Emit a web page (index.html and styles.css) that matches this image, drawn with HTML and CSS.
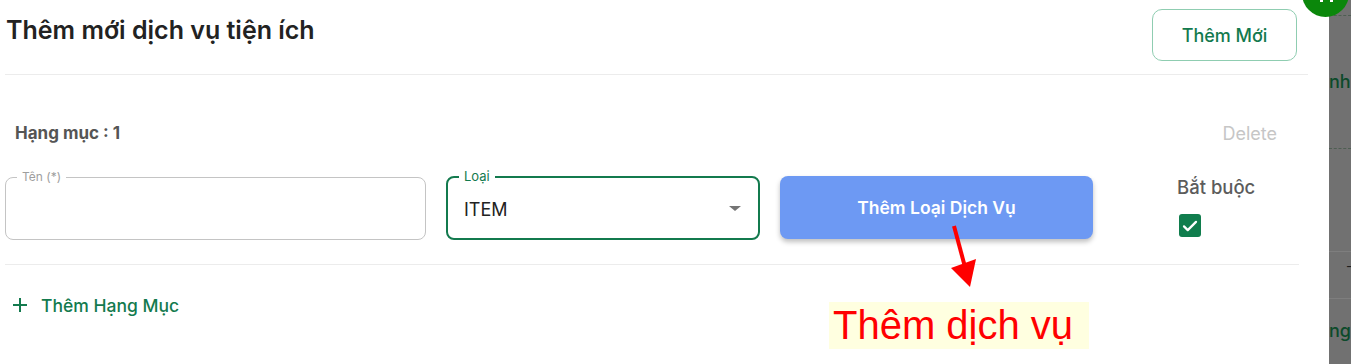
FILE: index.html
```html
<!DOCTYPE html>
<html lang="vi">
<head>
    <meta charset="UTF-8">
    <meta name="viewport" content="width=device-width, initial-scale=1.0">
    <title>Thêm mới dịch vụ tiện ích</title>
    <link rel="stylesheet" href="styles.css">
</head>
<body>
    <div class="modal">
        <div class="modal-header">
            <div class="modal-title">Thêm mới dịch vụ tiện ích</div>
            <button class="btn-outline">Thêm Mới</button>
        </div>

        <div class="section">
            <div class="item-head">
                <span class="item-title">Hạng mục : 1</span>
                <span class="item-delete">Delete</span>
            </div>

            <div class="item-row">
                <div class="field field-name">
                    <span class="field-label">Tên (*)</span>
                </div>
                <div class="field field-select">
                    <span class="field-label">Loại</span>
                    <span class="field-value">ITEM</span>
                    <span class="caret"></span>
                </div>
                <button class="btn-blue">Thêm Loại Dịch Vụ</button>
                <div class="required">
                    <div class="required-label">Bắt buộc</div>
                    <div class="checkbox">
                        <svg width="18" height="18" viewBox="0 0 24 24"><path d="M4 12.5l5 5L20 6.5" fill="none" stroke="#fff" stroke-width="3" stroke-linecap="round" stroke-linejoin="round"/></svg>
                    </div>
                </div>
            </div>

            <div class="add-item">
                <svg width="14" height="14" viewBox="0 0 14 14"><path d="M7 0v14M0 7h14" stroke="#137a4e" stroke-width="2"/></svg>
                <span>Thêm Hạng Mục</span>
            </div>
        </div>

        <svg class="note-arrow" width="40" height="70" viewBox="0 0 40 70">
            <line x1="5" y1="1" x2="16" y2="42" stroke="#ff0000" stroke-width="4"/>
            <polygon points="2,43 27,34 21,62" fill="#ff0000"/>
        </svg>
        <div class="note">Thêm dịch vụ</div>
    </div>

    <div class="backdrop">
        <div class="bd-dash bd-top"></div>
        <div class="bd-text bd-nh">nh</div>
        <div class="bd-dash bd-mid"></div>
        <div class="bd-line bd-l1"></div>
        <div class="bd-minus">-</div>
        <div class="bd-line bd-l2"></div>
        <div class="bd-text bd-ng">ng</div>
    </div>

    <div class="fab"><span></span><span></span></div>
</body>
</html>
```

FILE: styles.css
```css
body {
    margin: 0;
    height: 364px;
    overflow: hidden;
    display: flex;
    font-family: Inter, Roboto, 'Noto Sans', sans-serif;
    background: #fff;
}
.modal {
    flex: 1;
    position: relative;
    background: #fff;
}
.modal-header {
    margin: 0 21px 0 5px;
    height: 75px;
    box-sizing: border-box;
    padding: 9px 11px 0 1px;
    display: flex;
    justify-content: space-between;
    align-items: flex-start;
    border-bottom: 1px solid #ececec;
}
.modal-title {
    margin-top: 6px;
    font-size: 25px;
    line-height: 30px;
    font-weight: 600;
    color: #222;
}
.btn-outline {
    width: 145px;
    height: 52px;
    border: 1px solid #8fcdb1;
    border-radius: 10px;
    background: #fff;
    color: #137a4e;
    font-family: inherit;
    font-size: 18px;
    font-weight: 500;
}
.section {
    margin: 0 30px 0 5px;
}
.item-head {
    margin-top: 40px;
    height: 36px;
    padding: 0 22px 0 10px;
    display: flex;
    justify-content: space-between;
    align-items: center;
}
.item-title {
    font-size: 17px;
    font-weight: 700;
    color: #555;
}
.item-delete {
    font-size: 18px;
    color: #c6c6c6;
}
.item-row {
    margin-top: 25px;
    padding-bottom: 24px;
    display: flex;
    align-items: flex-start;
    gap: 20px;
    border-bottom: 1px solid #ececec;
}
.field {
    position: relative;
    box-sizing: border-box;
    border-radius: 8px;
    background: #fff;
}
.field-name {
    width: 421px;
    height: 63px;
    margin-top: 1px;
    border: 1px solid #c4c4c4;
}
.field-select {
    width: 314px;
    height: 64px;
    border: 2px solid #137a4e;
    display: flex;
    align-items: center;
    padding: 0 17px 0 16px;
}
.field-label {
    position: absolute;
    top: -9px;
    left: 11px;
    padding: 0 5px;
    background: #fff;
    font-size: 12px;
    line-height: 16px;
    color: #9e9e9e;
}
.field-select .field-label {
    left: 11px;
    top: -10px;
    font-size: 13px;
    color: #137a4e;
}
.field-value {
    flex: 1;
    font-size: 18px;
    color: #222;
    margin-top: 2px;
}
.caret {
    width: 0;
    height: 0;
    border-left: 6px solid transparent;
    border-right: 6px solid transparent;
    border-top: 5px solid #757575;
    margin-top: 1px;
}
.btn-blue {
    width: 313px;
    height: 63px;
    border: none;
    border-radius: 8px;
    background: #6d99f3;
    color: #fff;
    font-family: inherit;
    font-size: 17.5px;
    font-weight: 600;
    box-shadow: 0 3px 5px rgba(0, 0, 0, 0.25);
}
.required {
    margin-left: 64px;
}
.required-label {
    font-size: 18.5px;
    line-height: 22px;
    font-weight: 500;
    color: #5c5c5c;
}
.checkbox {
    margin: 16px 0 0 2px;
    width: 22px;
    height: 23px;
    border-radius: 3px;
    background: #107d4d;
    display: flex;
    align-items: center;
    justify-content: center;
}
.add-item {
    margin-top: 24px;
    height: 32px;
    padding-left: 8px;
    display: flex;
    align-items: center;
    gap: 14px;
    font-size: 17.5px;
    font-weight: 500;
    color: #137a4e;
}
.note-arrow {
    position: absolute;
    left: 949px;
    top: 225px;
}
.note {
    position: absolute;
    left: 829px;
    top: 302px;
    width: 260px;
    height: 47px;
    box-sizing: border-box;
    padding-left: 4px;
    background: #ffffe0;
    color: #ff0000;
    font-family: 'Liberation Sans', Arial, sans-serif;
    font-size: 40px;
    line-height: 47px;
}
.backdrop {
    width: 22px;
    background: #717171;
    overflow: hidden;
}
.bd-dash {
    border-top: 1px dashed #4e5e52;
}
.bd-top {
    margin-top: 15px;
}
.bd-text {
    font-size: 18px;
    line-height: 24px;
    font-weight: 500;
    color: #0c4a2a;
    white-space: nowrap;
}
.bd-nh {
    margin-top: 54px;
}
.bd-mid {
    margin-top: 54px;
}
.bd-line {
    border-top: 1px solid #7e7e7e;
}
.bd-l1 {
    margin-top: 102px;
}
.bd-minus {
    padding-left: 17px;
    height: 46px;
    line-height: 28px;
    color: #1e1e1e;
    font-size: 14px;
}
.bd-ng {
    margin-top: 20px;
}
.fab {
    position: absolute;
    left: 1302px;
    top: -30px;
    width: 47px;
    height: 47px;
    border-radius: 50%;
    background: #0b870b;
}
.fab span {
    position: absolute;
    top: 29px;
    width: 3px;
    height: 3px;
    background: #fff;
}
.fab span:first-child {
    left: 18px;
}
.fab span:last-child {
    left: 28px;
}
```
